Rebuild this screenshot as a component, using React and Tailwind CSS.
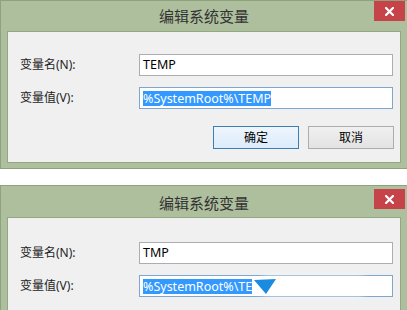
import React from 'react'

const FONT = { fontFamily: '"Noto Sans", "Noto Sans CJK SC", sans-serif' }

/* ── close button (red, white x) ── */
function CloseButton({ top }) {
  return (
    <div className={`absolute right-[2px] ${top} flex h-[20px] w-[31px] items-center justify-center bg-[#c7434a]`}>
      <svg width="9" height="9" viewBox="0 0 9 9">
        <path d="M1 1 L8 8 M8 1 L1 8" stroke="white" strokeWidth="2.2" strokeLinecap="square" />
      </svg>
    </div>
  )
}

function Field({ label, children, focused }) {
  return (
    <div className="flex items-center">
      <div className="w-[119px] text-[12px] text-[#1e1e1e]">{label}</div>
      <div
        className={`relative flex h-[22px] w-[254px] items-center border bg-white pl-[3px] text-[12.5px] text-black ${
          focused ? 'border-[#7ea6cf]' : 'border-[#abadb3]'
        }`}
      >
        {children}
      </div>
    </div>
  )
}

function Selected({ children }) {
  return <span className="inline-block bg-[#3399ff] leading-[15px] text-white">{children}</span>
}

function Dialog({ first, name, value, buttons }) {
  return (
    <div className="relative flex flex-col border-t border-l border-[#8fa27e] bg-[#aebf9d]">
      {!first && <div className="h-[3px]" />}
      <CloseButton top={first ? 'top-0' : 'top-[3px]'} />
      <div className={`flex items-center justify-center text-[15px] text-[#333] ${first ? 'h-[30px]' : 'h-[28px] pt-[1px]'}`}>
        编辑系统变量
      </div>
      <div className="ml-[6px] mr-[6px] mb-[5px] border border-[#94a783] bg-[#f0f0f0]">
        <div className={`flex flex-col gap-[11px] pl-[12px] pb-[13px] ${first ? 'pt-[22px]' : 'pt-[24px]'}`}>
          <Field label="变量名(N):">{name}</Field>
          <Field label="变量值(V):" focused>
            {value}
          </Field>
          {buttons ? (
            <div className="mt-[6px] flex justify-end gap-[9px] pr-[6px]">
              <button className="h-[23px] w-[86px] border border-[#3c7fb1] bg-gradient-to-b from-[#eef5fc] to-[#dcebfb] text-[12px] text-black">
                确定
              </button>
              <button className="h-[23px] w-[86px] border border-[#adadad] bg-gradient-to-b from-[#f0f0f0] to-[#e3e3e3] text-[12px] text-black">
                取消
              </button>
            </div>
          ) : (
            <div className="h-[30px]" />
          )}
        </div>
      </div>
      <div className="h-px bg-[#8fa27e]" />
    </div>
  )
}

export default function App() {
  return (
    <div className="h-[310px] w-[407px] overflow-hidden bg-white" style={FONT}>
      <Dialog first buttons name="TEMP" value={<Selected>%SystemRoot%\TEMP</Selected>} />
      <div className="h-[16px] bg-white" />
      <Dialog
        name="TMP"
        value={
          <>
            <Selected>%SystemRoot%\TE</Selected>
            <div className="absolute left-[118px] top-[1px] h-[18px] w-[110px] rounded-full bg-white blur-[3px]" />
            <svg className="absolute left-[114px] top-[3px]" width="24" height="16" viewBox="0 0 24 16">
              <path d="M0 1 L22 0 L12 15 Z" fill="#1a8be0" />
            </svg>
          </>
        }
      />
    </div>
  )
}
